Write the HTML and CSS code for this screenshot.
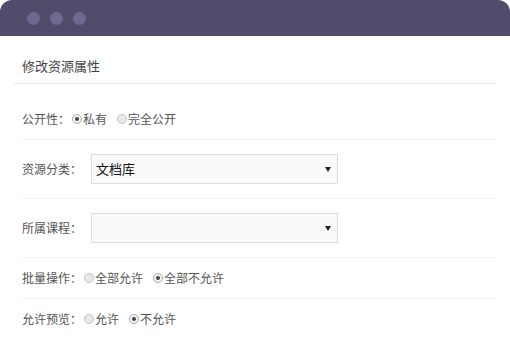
FILE: index.html
```html
<!DOCTYPE html>
<html>

<head>
    <meta charset="utf-8" />
    <title>修改资源属性</title>
    <meta name="viewport" content="width=device-width, initial-scale=1">
    <link rel="stylesheet" href="styles.css">
</head>

<body>

    <div class="window">
        <div class="titlebar">
            <span class="dot"></span>
            <span class="dot"></span>
            <span class="dot"></span>
        </div>
        <div class="panel">
            <div class="panel-title">修改资源属性</div>
            <div class="form">
                <div class="row">
                    <span class="label">公开性：</span>
                    <span class="radio checked"></span><span class="opt">私有</span>
                    <span class="radio"></span><span class="opt">完全公开</span>
                </div>
                <div class="row row-select">
                    <span class="label">资源分类：</span>
                    <div class="select">文档库</div>
                </div>
                <div class="row row-select">
                    <span class="label">所属课程：</span>
                    <div class="select"></div>
                </div>
                <div class="row">
                    <span class="label">批量操作：</span>
                    <span class="radio"></span><span class="opt">全部允许</span>
                    <span class="radio checked"></span><span class="opt">全部不允许</span>
                </div>
                <div class="row last">
                    <span class="label">允许预览：</span>
                    <span class="radio"></span><span class="opt">允许</span>
                    <span class="radio checked"></span><span class="opt">不允许</span>
                </div>
            </div>
        </div>
    </div>

</body>

</html>
```

FILE: styles.css
```css
body {
    margin: 0;
    background: #fff;
    font-family: "Noto Sans CJK SC", "Noto Sans", sans-serif;
    color: #555;
}

.window {
    width: 510px;
    height: 360px;
    background: #fff;
    border-radius: 12px 12px 0 0;
    overflow: hidden;
}

.titlebar {
    height: 36px;
    background: #524b6b;
    display: flex;
    align-items: center;
    gap: 10px;
    padding-left: 27px;
}

.dot {
    width: 13px;
    height: 13px;
    border-radius: 50%;
    background: #6f6891;
}

.panel {
    margin: 0 13px 0 14px;
}

.panel-title {
    padding: 20px 0 7px 8px;
    line-height: 20px;
    font-size: 13px;
    color: #444;
    border-bottom: 1px solid #ececec;
}

.form {
    margin-top: 15px;
    padding-left: 8px;
}

.row {
    display: flex;
    align-items: center;
    padding: 10px 0;
    line-height: 20px;
    font-size: 12px;
    border-bottom: 1px solid #f2f2f2;
}

.row.last {
    border-bottom: 0;
}

.row-select {
    padding: 14px 0;
}

.label {
    color: #555;
}

.radio {
    width: 8px;
    height: 8px;
    border: 1px solid #c4c4c4;
    border-radius: 50%;
    background: #e8e8e8;
    margin: 0 1px 0 2px;
    display: flex;
    align-items: center;
    justify-content: center;
}

.radio.checked {
    background: #f4f4f4;
    border-color: #a9a9a9;
}

.radio.checked::after {
    content: "";
    width: 4px;
    height: 4px;
    border-radius: 50%;
    background: #444;
}

.opt {
    margin-right: 8px;
    color: #555;
}

.select {
    position: relative;
    width: 241px;
    height: 28px;
    margin-left: 9px;
    padding-left: 4px;
    border: 1px solid #dcdcdc;
    background: #fafafa;
    line-height: 28px;
    font-size: 13px;
    color: #111;
}

.select::after {
    content: "";
    position: absolute;
    right: 6px;
    top: 12px;
    border-left: 3px solid transparent;
    border-right: 3px solid transparent;
    border-top: 5px solid #222;
}
```
